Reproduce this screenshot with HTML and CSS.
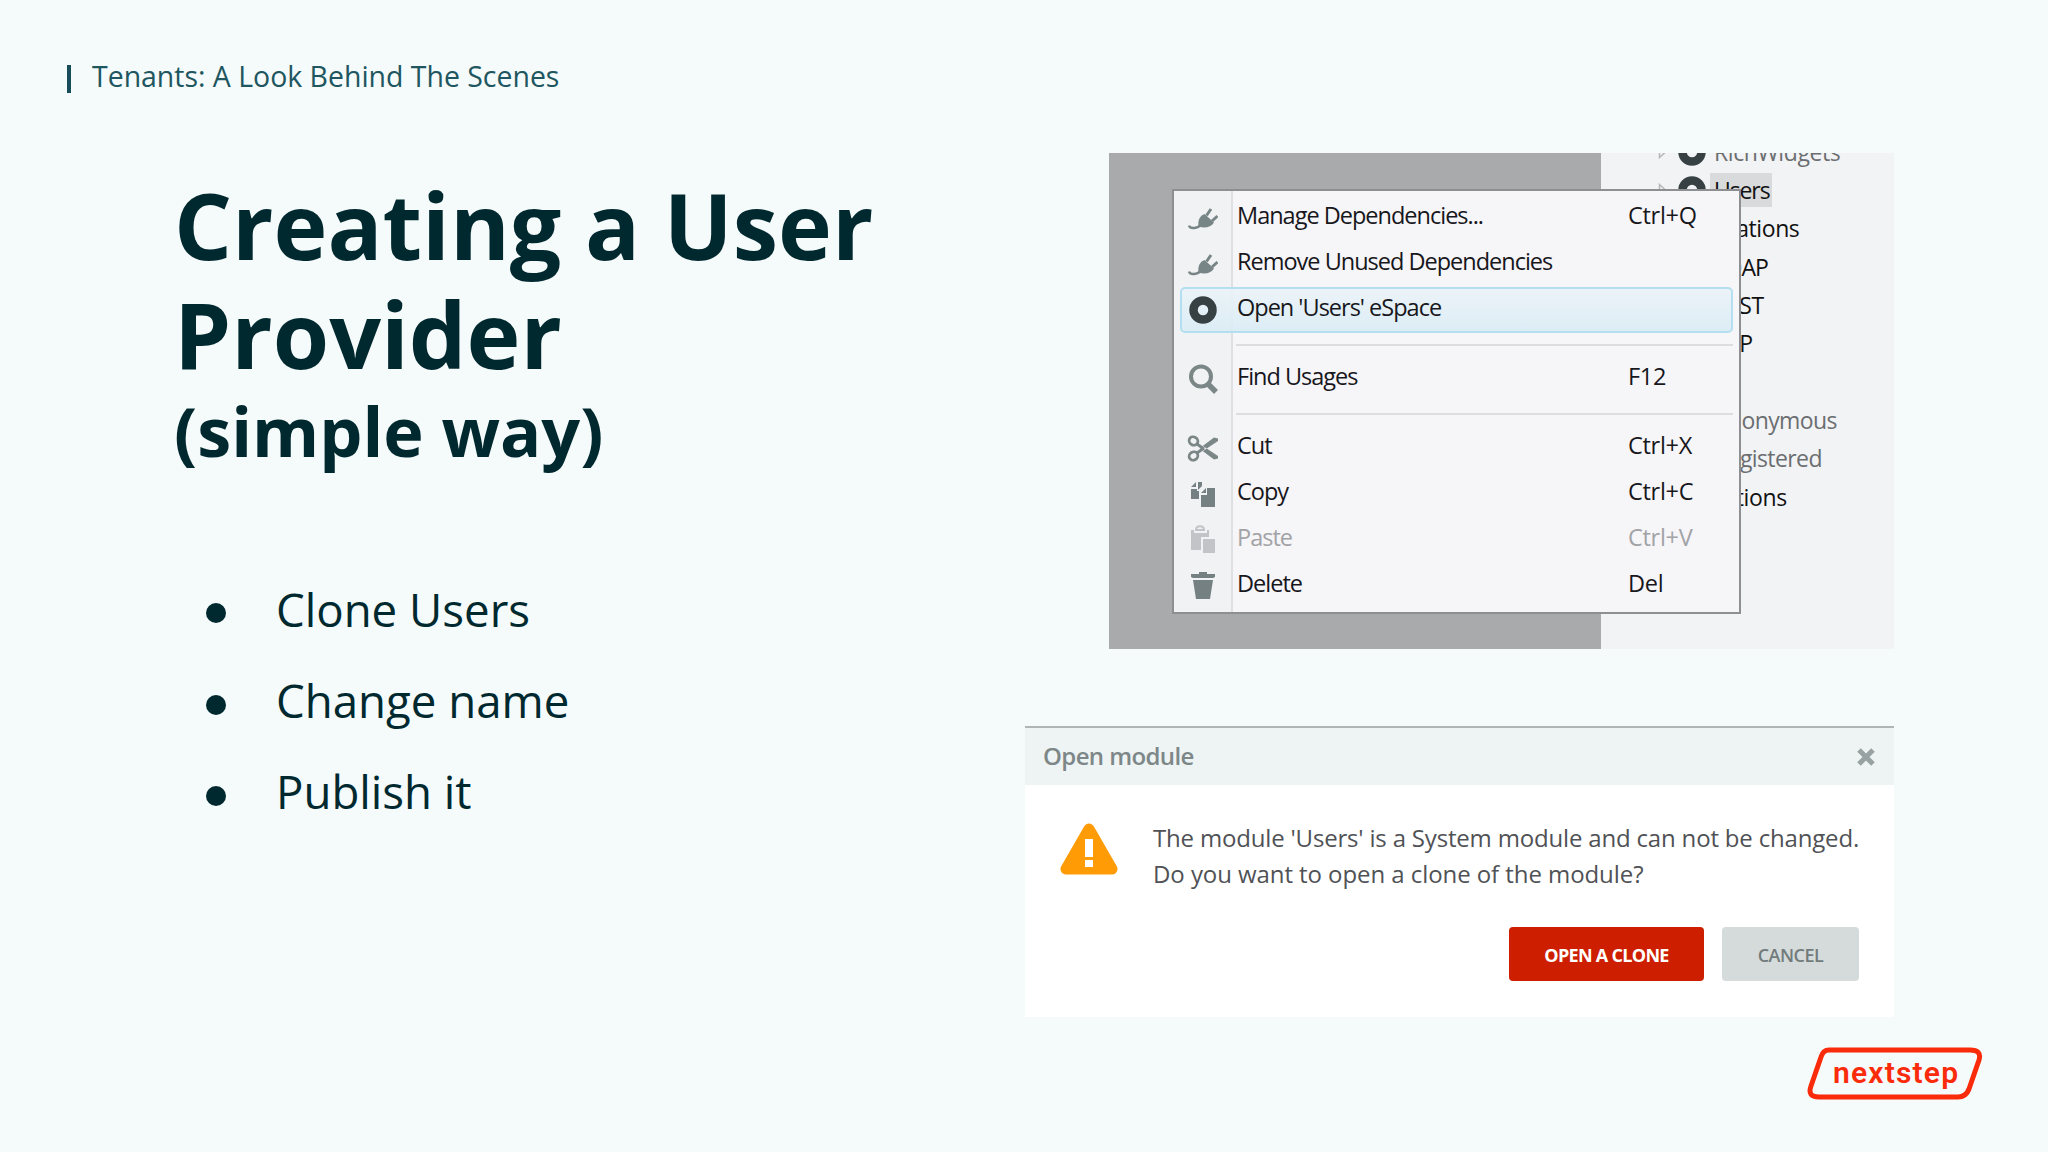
FILE: index.html
```
<!DOCTYPE html>
<html lang="en">
<head>
  <meta charset="UTF-8">
  <meta name="viewport" content="width=device-width, initial-scale=1.0">
  <title>Tenants: A Look Behind The Scenes</title>
  <link rel="stylesheet" href="styles.css">
</head>
<body>
  <!-- Shared icons -->
  <svg class="defs" width="0" height="0">
    <symbol id="plug" viewBox="0 0 30 30">
      <path d="M1 22.500c1 4 9 3 12-1" fill="none" stroke="#788587" stroke-width="2.4"/>
      <path d="M10.500 23.500c-1-7 2-11 6-12.500l9.500 8.500c-3 4.500-9 6.500-15.500 4z" fill="#788587"/>
      <path d="M18.500 12.500l4.500-6.500M24 18l5.500-5" fill="none" stroke="#788587" stroke-width="3"/>
    </symbol>
    <symbol id="ring" viewBox="0 0 28 28">
      <circle cx="14" cy="14" r="9.5" fill="none" stroke="#374144" stroke-width="8.5"/>
    </symbol>
    <symbol id="arrow" viewBox="0 0 10 14">
      <path d="M1.5 1.5l6 5.5-6 5.5z" fill="none" stroke="#b5b7b9" stroke-width="1.5"/>
    </symbol>
  </svg>

  <header class="topbar">
    <span class="bar"></span>
    <span>Tenants: A Look Behind The Scenes</span>
  </header>

  <main class="content">
    <section class="text">
      <h1>Creating a User<br>Provider</h1>
      <h2>(simple way)</h2>
      <ul>
        <li>Clone Users</li>
        <li>Change name</li>
        <li>Publish it</li>
      </ul>
    </section>

    <section class="shots">
      <div class="studio">
        <div class="tree">
          <div class="node muted"><svg class="arrow"><use href="#arrow"/></svg><svg class="ring"><use href="#ring"/></svg><span>RichWidgets</span></div>
          <div class="node"><svg class="arrow"><use href="#arrow"/></svg><svg class="ring"><use href="#ring"/></svg><span class="selected">Users</span></div>
          <div class="node folder">Integrations</div>
          <div class="node leaf soap">SOAP</div>
          <div class="node leaf">REST</div>
          <div class="node leaf">SAP</div>
          <div class="node role muted first">Anonymous</div>
          <div class="node role muted">Registered</div>
          <div class="node folder">Exceptions</div>
        </div>

        <div class="menu">
          <div class="item">
            <svg class="icon" viewBox="0 0 30 30"><use href="#plug"/></svg>
            <span class="label">Manage Dependencies...</span><span class="key">Ctrl+Q</span>
          </div>
          <div class="item">
            <svg class="icon" viewBox="0 0 30 30"><use href="#plug"/></svg>
            <span class="label">Remove Unused Dependencies</span>
          </div>
          <div class="item active">
            <svg class="icon" viewBox="0 0 30 30"><use href="#ring" x="1" y="1" width="28" height="28"/></svg>
            <span class="label">Open 'Users' eSpace</span>
          </div>
          <div class="separator"></div>
          <div class="item">
            <svg class="icon" viewBox="0 0 30 30">
              <circle cx="13" cy="12.5" r="10" fill="none" stroke="#7b8687" stroke-width="4"/>
              <path d="M20 20l8 8" stroke="#7b8687" stroke-width="5.5"/>
            </svg>
            <span class="label">Find Usages</span><span class="key">F12</span>
          </div>
          <div class="separator"></div>
          <div class="item">
            <svg class="icon scissors" viewBox="0 0 30 30">
              <g fill="none" stroke="#7b8687" stroke-width="2.8">
                <ellipse cx="5.500" cy="8" rx="4.500" ry="4" transform="rotate(30 5.5 8)"/>
                <ellipse cx="5.500" cy="23" rx="4.500" ry="4" transform="rotate(-30 5.5 23)"/>
                <path d="M9 11l7 5M9 20l7-5"/>
              </g>
              <path d="M12 15L26 4.500l4 1L30 8 15 18zM12 16L26 26.500l4-1V23L15 13z" fill="#7b8687"/>
            </svg>
            <span class="label">Cut</span><span class="key">Ctrl+X</span>
          </div>
          <div class="item">
            <svg class="icon" viewBox="0 0 30 30">
              <g fill="#748082">
                <path d="M3 8l5-5v5zM10 3h4v4l-4 4zM3 10h6v2l2 0v8H3zM13 14l5-5v5zM19 9h8v19H13V16h6z"/>
              </g>
            </svg>
            <span class="label">Copy</span><span class="key">Ctrl+C</span>
          </div>
          <div class="item disabled">
            <svg class="icon" viewBox="0 0 30 30">
              <path d="M8 5c0-5 8-5 8 0" fill="none" stroke="#c3c4c7" stroke-width="2"/>
              <path d="M3 5h3v3h13V5h2v7h-8v13H3zM7 4h10v2H7zM15 14h12v14H15z" fill="#c3c4c7"/>
            </svg>
            <span class="label">Paste</span><span class="key">Ctrl+V</span>
          </div>
          <div class="item">
            <svg class="icon" viewBox="0 0 30 30">
              <path d="M3 3h8V1h8v2h8v3l-2 1H5L3 6zM5 9h20l-3 19H8z" fill="#748082"/>
            </svg>
            <span class="label">Delete</span><span class="key">Del</span>
          </div>
        </div>
      </div>

      <div class="dialog">
        <div class="dialog-title">
          <span>Open module</span>
          <svg class="close" viewBox="0 0 18 18"><path d="M2 2l14 14M16 2L2 16" stroke="#98a2a3" stroke-width="5"/></svg>
        </div>
        <div class="dialog-body">
          <svg class="warning" viewBox="0 0 58 52">
            <path d="M29 6L6 46h46z" fill="#ff9b05" stroke="#ff9b05" stroke-width="11" stroke-linejoin="round"/>
            <path d="M25 16h8v18h-8zM25 37h8v7h-8z" fill="#fff"/>
          </svg>
          <p>The module 'Users' is a System module and can not be changed.<br><span class="question">Do you want to open a clone of the module?</span></p>
        </div>
        <div class="buttons">
          <button class="primary">OPEN A CLONE</button>
          <button class="secondary">CANCEL</button>
        </div>
      </div>
    </section>
  </main>

  <footer>
    <svg class="logo" viewBox="0 0 176 54">
      <path d="M22 3h141q12 0 9 10l-10 29q-3 8-11 8H12Q0 50 4 39L14 10q2-7 8-7z" fill="none" stroke="#fa2b0b" stroke-width="5"/>
      <text x="26" y="35.5">nextstep</text>
    </svg>
  </footer>
</body>
</html>
```
FILE: styles.css
```
/* General Styles */
* {
  box-sizing: border-box;
}

body {
  margin: 0;
  height: 1152px;
  overflow: hidden;
  background: #f5fafa;
  color: #00292f;
  font-family: "Open Sans", "Noto Sans", sans-serif;
}

.defs {
  position: absolute;
}

/* Top Bar */
.topbar {
  display: flex;
  align-items: center;
  padding: 58px 0 0 67px;
  font-size: 28.45px;
  line-height: 36px;
  color: #20565f;
}

.bar {
  width: 4px;
  height: 28px;
  margin: 6px 21px 0 0;
  background: #184c59;
}

/* Content */
.content {
  display: flex;
  justify-content: space-between;
  height: 864px;
  margin-top: 59px;
  padding: 0 154px 0 174px;
}

.text {
  padding-top: 18px;
}

h1 {
  margin: 0;
  font-size: 91.2px;
  line-height: 109.3px;
}

h2 {
  margin: 0;
  font-size: 68.4px;
  line-height: 82px;
}

ul {
  list-style: none;
  margin: 92px 0 0;
  padding: 0 0 0 32px;
}

li {
  display: flex;
  align-items: center;
  font-size: 45.6px;
  line-height: 91.3px;
}

li::before {
  content: "";
  width: 20px;
  height: 20px;
  margin: 8px 50px 0 0;
  border-radius: 50%;
  background: #00292f;
}

.shots {
  display: flex;
  flex-direction: column;
  align-items: flex-end;
  justify-content: space-between;
  width: 869px;
}

/* Service Studio */
.studio {
  position: relative;
  width: 785px;
  height: 496px;
  padding-left: 492px;
  background: #a9aaac;
}

.tree {
  height: 496px;
  overflow: hidden;
  background: #f2f3f5;
  color: #111;
  font-size: 23px;
  line-height: 38px;
  letter-spacing: -0.4px;
}

.node {
  display: flex;
  align-items: center;
  height: 38.2px;
}

.node:first-child {
  margin-top: -20px;
}

.arrow {
  width: 10px;
  height: 14px;
  margin: 0 10px 0 57px;
}

.ring {
  width: 28px;
  height: 28px;
  margin-right: 4px;
}

.node span {
  padding: 0 4px;
  line-height: 34px;
}

.node .selected {
  padding-right: 2px;
  background: #d9dadb;
  letter-spacing: -1.1px;
}

.muted {
  color: #6b6e70;
}

.folder {
  padding-left: 74px;
}

.leaf {
  padding-left: 112px;
}

.soap {
  letter-spacing: -1px;
}

.role {
  padding-left: 113px;
  letter-spacing: -0.6px;
}

.first {
  margin-top: 39px;
}

/* Context Menu */
.menu {
  position: absolute;
  left: 63px;
  top: 36px;
  width: 569px;
  height: 425px;
  padding: 4px 6px;
  border: 2px solid #8e8f92;
  background: linear-gradient(90deg, #f1f2f4 57px, #dfe0e3 57px, #dfe0e3 59px, #f6f5f8 59px);
  color: #17171c;
  font-size: 23.5px;
}

.item {
  display: flex;
  align-items: center;
  height: 46px;
  padding-left: 6px;
  border: 2px solid transparent;
  border-radius: 5px;
}

.active {
  border-color: #b3dff0;
  background: linear-gradient(rgba(234, 243, 248, 0.9), rgba(218, 236, 245, 0.9));
}

.icon {
  width: 30px;
  height: 30px;
  margin-right: 19px;
}

.scissors {
  width: 32px;
  margin: 0 18px 0 -1px;
}

.label {
  width: 391px;
  margin-top: -6px;
  letter-spacing: -1px;
}

.key {
  margin-top: -6px;
  letter-spacing: -0.3px;
}

.disabled {
  color: #a2a3a6;
}

.separator {
  height: 2px;
  margin: 11px 0 10px 56px;
  background: #dddde0;
}

/* Dialog */
.dialog {
  width: 869px;
  height: 291px;
  border-top: 2px solid #adb5b5;
  background: #fff;
}

.dialog-title {
  display: flex;
  justify-content: space-between;
  height: 57px;
  padding: 0 19px 0 18px;
  background: #eef3f4;
  color: #7d8788;
  font-size: 24px;
  font-weight: 600;
  line-height: 56px;
  letter-spacing: -0.6px;
}

.close {
  width: 18px;
  height: 18px;
  margin-top: 20px;
}

.dialog-body {
  display: flex;
  padding: 35px 0 0 35px;
}

.warning {
  width: 58px;
  height: 52px;
  margin: 3px 35px 0 0;
}

p {
  margin: 0;
  color: #505256;
  font-size: 24px;
  line-height: 36px;
  letter-spacing: -0.18px;
  white-space: nowrap;
}

.question {
  letter-spacing: -0.07px;
}

/* Buttons */
.buttons {
  display: flex;
  justify-content: flex-end;
  gap: 18px;
  padding: 35px 35px 0 0;
}

button {
  height: 54px;
  padding: 2px 0 0;
  border: none;
  border-radius: 4px;
  font-family: inherit;
  font-size: 18px;
}

.primary {
  width: 195px;
  background: #cd1f00;
  color: #fff;
  font-weight: 700;
  letter-spacing: -0.7px;
}

.secondary {
  width: 137px;
  background: #d5dbdb;
  color: #727b7b;
  font-weight: 600;
  letter-spacing: -0.5px;
}

/* Footer */
footer {
  display: flex;
  justify-content: flex-end;
  padding: 30px 65px 0 0;
}

.logo {
  width: 176px;
  height: 54px;
}

.logo text {
  fill: #fa2b0b;
  font-family: Roboto, sans-serif;
  font-size: 30px;
  font-weight: 600;
  letter-spacing: 1.2px;
}
```
